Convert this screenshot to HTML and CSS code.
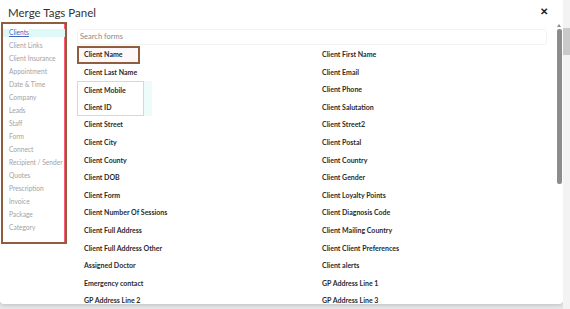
FILE: index.html
```html
<!DOCTYPE html>
<html>
<head>
<meta charset="utf-8">
<link rel="stylesheet" href="styles.css">
</head>
<body>
<div class="modal">
  <div class="header">
    <span class="title">Merge Tags Panel</span>
    <span class="close">&#x2715;</span>
  </div>
  <div class="content">
    <ul class="sidebar">
      <li class="active"><span>Clients</span></li>
      <li>Client Links</li>
      <li>Client Insurance</li>
      <li>Appointment</li>
      <li>Date &amp; Time</li>
      <li>Company</li>
      <li>Leads</li>
      <li>Staff</li>
      <li>Form</li>
      <li>Connect</li>
      <li>Recipient / Sender</li>
      <li>Quotes</li>
      <li>Prescription</li>
      <li>Invoice</li>
      <li>Package</li>
      <li>Category</li>
    </ul>
    <div class="main">
      <div class="search">Search forms</div>
      <div class="grid">
        <div class="tag hover">Client Name</div><div class="tag">Client First Name</div>
        <div class="tag">Client Last Name</div><div class="tag">Client Email</div>
        <div class="tag mark-top">Client Mobile</div><div class="tag">Client Phone</div>
        <div class="tag mark-bottom">Client ID</div><div class="tag">Client Salutation</div>
        <div class="tag">Client Street</div><div class="tag">Client Street2</div>
        <div class="tag">Client City</div><div class="tag">Client Postal</div>
        <div class="tag">Client County</div><div class="tag">Client Country</div>
        <div class="tag">Client DOB</div><div class="tag">Client Gender</div>
        <div class="tag">Client Form</div><div class="tag">Client Loyalty Points</div>
        <div class="tag">Client Number Of Sessions</div><div class="tag">Client Diagnosis Code</div>
        <div class="tag">Client Full Address</div><div class="tag">Client Mailing Country</div>
        <div class="tag">Client Full Address Other</div><div class="tag">Client Client Preferences</div>
        <div class="tag">Assigned Doctor</div><div class="tag">Client alerts</div>
        <div class="tag">Emergency contact</div><div class="tag">GP Address Line 1</div>
        <div class="tag">GP Address Line 2</div><div class="tag">GP Address Line 3</div>
      </div>
    </div>
    <div class="scrollbar">
      <div class="arrow"></div>
      <div class="thumb"></div>
    </div>
  </div>
</div>
<div class="page-scroll">
  <div class="page-thumb"></div>
</div>
</body>
</html>
```

FILE: styles.css
```css
html, body {
  margin: 0;
  padding: 0;
}
body {
  width: 570px;
  height: 309px;
  overflow: hidden;
  display: flex;
  background: #e6e7e8;
  font-family: "Lato", "Liberation Sans", sans-serif;
  color: #2d2d2d;
}
.modal {
  width: 563px;
  height: 304px;
  background: #fff;
  border-radius: 0 0 4px 4px;
  box-shadow: 0 1px 4px rgba(0,0,0,0.18);
  display: flex;
  flex-direction: column;
  overflow: hidden;
}
.header {
  height: 22px;
  display: flex;
  align-items: center;
  justify-content: space-between;
  padding: 0 15px 0 8px;
  flex: none;
}
.title {
  font-size: 11.5px;
  color: #333;
  padding-top: 2px;
}
.close {
  font-size: 10px;
  font-weight: bold;
  color: #222;
}
.content {
  flex: 1;
  display: flex;
  min-height: 0;
}
.sidebar {
  list-style: none;
  margin: 0 0 0 1px;
  padding: 2px 0 0 0;
  width: 62px;
  height: 216px;
  border: 2px solid #8e5e3f;
  box-shadow: inset -1px 0 0 #ff5a78;
  flex: none;
}
.sidebar li {
  height: 13px;
  line-height: 13px;
  font-size: 6.6px;
  color: #a3a3a3;
  padding-left: 6px;
  white-space: nowrap;
}
.sidebar li.active {
  background: linear-gradient(to bottom, transparent 3px, #dff9f8 3px, #dff9f8 11px, transparent 11px);
}
.sidebar li.active span {
  color: #3c63c4;
  text-decoration: underline;
  background: #fff;
}
.main {
  flex: 1;
  padding: 7px 8px 0 10px;
  min-width: 0;
}
.search {
  height: 14px;
  line-height: 14px;
  border: 1px solid #f3f3f3;
  border-radius: 3px;
  font-size: 7.5px;
  color: #8a8a8a;
  padding-left: 2px;
  width: 466px;
}
.grid {
  margin-top: 1px;
  display: grid;
  grid-template-columns: 238px 1fr;
  grid-auto-rows: 17.6px;
}
.tag {
  font-size: 7px;
  font-weight: bold;
  color: #2b2b2b;
  line-height: 17.6px;
  padding-left: 7px;
  white-space: nowrap;
}
.tag.hover {
  width: 54px;
  padding-left: 5px;
  line-height: 13.6px;
  border: 2px solid #8e5e3f;
  background: #fff7f8;
}
.tag.mark-top {
  width: 59px;
  padding-left: 6px;
  border: 1px solid #f6c3f1;
  border-bottom: none;
  line-height: 16.6px;
  box-shadow: 8px 0 0 #eefbfb;
}
.tag.mark-bottom {
  width: 59px;
  padding-left: 6px;
  border: 1px solid #f6c3f1;
  border-top: none;
  line-height: 16.6px;
  box-shadow: 8px 0 0 #eefbfb;
}
.scrollbar {
  width: 6px;
  flex: none;
  margin-right: 1px;
  display: flex;
  flex-direction: column;
  align-items: center;
  padding-top: 2px;
}
.arrow {
  width: 0;
  height: 0;
  border-left: 2.5px solid transparent;
  border-right: 2.5px solid transparent;
  border-bottom: 3px solid #8a8a8a;
}
.thumb {
  margin-top: 2px;
  width: 5px;
  height: 155px;
  background: #8c8c8c;
  border-radius: 2px;
}
.page-scroll {
  flex: 1;
  background: #f3f3f3;
  padding-top: 28px;
}
.page-thumb {
  height: 27px;
  background: #c9c9c9;
}
```
